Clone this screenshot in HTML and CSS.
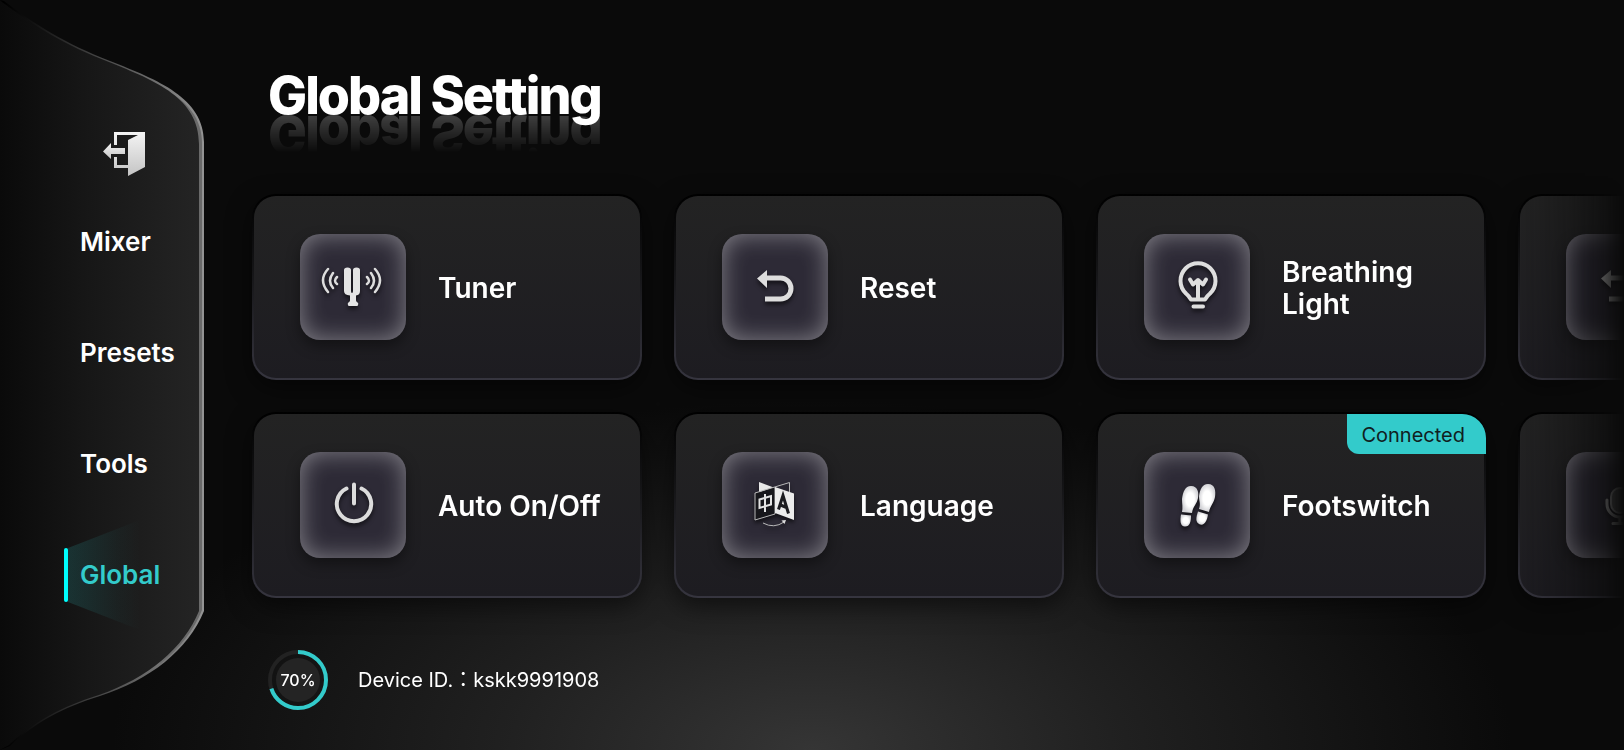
FILE: index.html
```html
<!DOCTYPE html>
<html lang="en">
<head>
	<meta charset="utf-8">
	<title>Global Setting</title>
	<meta name="viewport" content="width=device-width, initial-scale=1">
	<link rel="stylesheet" href="styles.css">
</head>
<body>
	<!-- Shared paint for the icons -->
	<svg class="defs" width="0" height="0" aria-hidden="true">
		<defs>
			<linearGradient id="metal" x1="0" y1="0" x2="0" y2="1">
				<stop offset="0" stop-color="#f4f4f4"/>
				<stop offset="1" stop-color="#c4c4c4"/>
			</linearGradient>
			<radialGradient id="sole">
				<stop offset=".5" stop-color="#fff"/>
				<stop offset="1" stop-color="#d4d4d8"/>
			</radialGradient>
			<symbol id="icon-reset" viewBox="0 0 64 64">
				<path fill="#dedede" d="M14 23.500 24 15v5.500h13.500a13 13 0 0 1 0 26H22v-5h15.500a8 8 0 0 0 0-16H24V33z"/>
			</symbol>
		</defs>
	</svg>

	<aside class="sidebar">
		<svg class="sidebar-shape" viewBox="0 0 206 750" preserveAspectRatio="none" aria-hidden="true">
			<defs>
				<linearGradient id="panel">
					<stop offset="0" stop-color="#0a0a0a"/>
					<stop offset=".45" stop-color="#171717"/>
					<stop offset="1" stop-color="#242424"/>
				</linearGradient>
				<linearGradient id="edge" gradientUnits="userSpaceOnUse" x1="0" y1="0" x2="204" y2="0">
					<stop offset=".02" stop-color="#000"/>
					<stop offset=".18" stop-color="#141414"/>
					<stop offset=".5" stop-color="#484848"/>
					<stop offset="1" stop-color="#949494"/>
				</linearGradient>
			</defs>
			<path fill="url(#edge)" d="M4 1C34 24 66 44 110 61C158 80 204 98 204 142V611C188 650 150 680 100 696C62 708 36 722 10 746L0 750V0z"/>
			<path fill="#6a6a6a" d="M150 82C190 99 202 120 202 144V610C194 630 180 648 160 664z"/>
			<path fill="url(#panel)" d="M2 2C34 26 66 46 109 62C156 81 199 98 199 144V611C184 648 148 678 99 695C61 707 35 721 9 745L0 750V0z"/>
		</svg>
		<a class="exit" href="#" aria-label="Exit">
			<svg viewBox="0 0 42 45" width="42" height="45" aria-hidden="true">
				<path fill="url(#metal)" d="M0 20.500 8 12v5h14v6H8v5z"/>
				<path fill="url(#metal)" d="M11 1H42V36L25 45V37H11V26h3v8H25V9L35 4H14v10h-3z"/>
			</svg>
		</a>
		<nav class="menu">
			<a href="#mixer">Mixer</a>
			<a href="#presets">Presets</a>
			<a href="#tools">Tools</a>
			<a class="active" href="#global" aria-current="page">Global</a>
		</nav>
	</aside>

	<main>
		<h1>Global Setting</h1>

		<div class="cards">
			<button class="card" type="button">
				<span class="tile">
					<svg viewBox="0 0 64 64" aria-hidden="true">
						<g fill="#e4e4e4">
							<path d="M23 15q0-2.500 3.500-2.500t3.500 2.500v21q0 2 1 2t1-2V15q0-2.500 3.500-2.500t3.500 2.500v21q0 4-4 4.500v5q0 1 1.500 2t0 3.500h-9q-1.500-2.500 0-3.500t1.500-2v-5q-6-.5-6-4.500z"/>
						</g>
						<g fill="none" stroke="#dcdcdc" stroke-width="2.500" stroke-linecap="round">
							<path d="M7 14q-10 11 0 23M12 18q-6 8 0 15M16 22q-4 4 0 7M46 22q4 4 0 7M50 18q6 8 0 15M54 14q10 11 0 23"/>
						</g>
					</svg>
				</span>
				<span class="label">Tuner</span>
			</button>
			<button class="card" type="button">
				<span class="tile"><svg viewBox="0 0 64 64" aria-hidden="true"><use href="#icon-reset"/></svg></span>
				<span class="label">Reset</span>
			</button>
			<button class="card" type="button">
				<span class="tile">
					<svg viewBox="0 0 64 64" aria-hidden="true">
						<g fill="none" stroke="#dedede" stroke-width="4" stroke-linecap="round" stroke-linejoin="round">
							<path d="M26 44.500H40Q42 41 45 38.500A17.500 17.500 0 1 0 21 38.500Q24 41 26 44.500z"/>
							<path d="M33 44V28M25 24.500l3 5 5-4.500 5 4.500 3-5M28.500 51.500h9.500"/>
						</g>
					</svg>
				</span>
				<span class="label">Breathing Light</span>
			</button>
			<button class="card" type="button" aria-label="Reset">
				<span class="tile"><svg viewBox="0 0 64 64" aria-hidden="true"><use href="#icon-reset"/></svg></span>
			</button>
			<button class="card" type="button">
				<span class="tile">
					<svg viewBox="0 0 64 64" aria-hidden="true">
						<g fill="none" stroke="#dcdcdc" stroke-width="4" stroke-linecap="round">
							<path d="M25.500 15.500a17.200 17.200 0 1 0 15 0M33 11.500v19"/>
						</g>
					</svg>
				</span>
				<span class="label">Auto On/Off</span>
			</button>
			<button class="card" type="button">
				<span class="tile">
					<svg viewBox="0 0 64 64" aria-hidden="true">
						<path fill="#e8e8e8" d="M16 9 32 15 16 20z"/>
						<path fill="#17171b" d="M12 20.500 31.500 14V41L12 47z"/>
						<path fill="none" stroke="#b8b8b8" d="M12 20 46.500 9.500V20M12 20V47L32 41V14"/>
						<path fill="#ececec" d="M32 14 51 20.500V47L32 40z"/>
						<path fill="none" stroke="#e4e4e4" stroke-width="2" d="M16.500 26.500 28 23v8.500L16.500 35zM22 21v18"/>
						<path fill="none" stroke="#1c1c20" stroke-width="3" d="M35.500 36.500 40 22.500 45.500 40.500M37.500 32l6 2.500"/>
						<path fill="none" stroke="#b8b8b8" d="M20 50q11 6 21-1"/>
						<path fill="#dedede" d="M38.500 47.500 43 47l-1.500 4z"/>
					</svg>
				</span>
				<span class="label">Language</span>
			</button>
			<button class="card" type="button">
				<span class="tile">
					<svg viewBox="0 0 64 64" aria-hidden="true">
						<g fill="url(#sole)">
							<path d="M26 13c7 0 8 7 7 12-1 6-5 8-6 15l-10-1c1-5 0-8 0-13 1-7 3-13 9-13z"/>
							<path d="M16 41.500l10 1c0 6-1 11-6 11s-5-6-4-12z"/>
							<path d="M43 11c7 0 8 7 7 13-1 6-5 9-6 15l-10-3c2-5 0-8 0-13 1-6 3-12 9-12z"/>
							<path d="M33 38.500l10 3c-1 6-3 11-8 10-5-2-4-7-2-13z"/>
						</g>
					</svg>
				</span>
				<span class="label">Footswitch</span>
				<span class="badge">Connected</span>
			</button>
			<button class="card" type="button" aria-label="Microphone">
				<span class="tile">
					<svg viewBox="0 0 64 64" aria-hidden="true">
						<rect x="24" y="15" width="18" height="25" rx="9" fill="#6c6c6c" stroke="#bbb" stroke-width="2"/>
						<path fill="none" stroke="#bbb" stroke-width="3" stroke-linecap="round" d="M20 27v4a13 13 0 0 0 26 0v-4M33 44v6M26 50.500h14"/>
					</svg>
				</span>
			</button>
		</div>

		<footer class="status">
			<div class="battery" role="img" aria-label="Battery">
				<svg viewBox="0 0 60 60" aria-hidden="true">
					<circle cx="30" cy="30" r="28" fill="none" stroke="#222" stroke-width="4"/>
					<circle cx="30" cy="30" r="22" fill="#242424"/>
					<circle cx="30" cy="30" r="28" fill="none" stroke="#33cbcb" stroke-width="4" pathLength="100" stroke-dasharray="70 100" transform="rotate(-90 30 30)"/>
				</svg>
				<span>70%</span>
			</div>
			<p>Device ID.：kskk9991908</p>
		</footer>
	</main>
</body>
</html>
```
FILE: styles.css
```css
* {
	box-sizing: border-box;
}

body {
	margin: 0;
	min-height: 100vh;
	display: flex;
	font-family: Inter, "Noto Sans CJK TC", sans-serif;
	color: #fff;
	background: radial-gradient(ellipse 700px 350px at 50% 100%, #353535, #202020 45%, #0a0a0a) #0a0a0a;
}

.defs {
	position: absolute;
}

/* Sidebar */

.sidebar {
	position: relative;
	flex: none;
	width: 206px;
	padding-top: 131px;
}

.sidebar-shape {
	position: absolute;
	inset: 0;
	width: 100%;
	height: 100%;
	z-index: -1;
}

.exit {
	display: block;
	width: 42px;
	height: 45px;
	margin-left: 103px;
}

.menu {
	display: flex;
	flex-direction: column;
	gap: 57px;
	margin-top: 39px;
	padding-left: 64px;
}

.menu a {
	position: relative;
	padding-left: 16px;
	font-size: 26px;
	font-weight: 600;
	line-height: 54px;
	color: #fff;
	text-decoration: none;
}

.menu .active {
	color: #33cbcb;
}

.active::before {
	content: '';
	position: absolute;
	inset: 0 auto 0 0;
	width: 4px;
	border-radius: 2px;
	background: #0ff;
}

/* Light cone coming out of the marker */
.active::after {
	content: '';
	position: absolute;
	z-index: -1;
	top: -28px;
	bottom: -28px;
	left: 4px;
	width: 72px;
	background: linear-gradient(to right, rgba(51, 203, 203, .17), rgba(51, 203, 203, .04) 70%, transparent);
	clip-path: polygon(0 28px, 100% 0, 100% 100%, 0 82px);
}

/* Content */

main {
	flex: 1;
	min-width: 0;
	padding: 77px 0 40px 46px;
	overflow: hidden;
	/* the row of cards fades out at the window edge */
	-webkit-mask-image: linear-gradient(to left, transparent, rgba(0, 0, 0, .3) 20px, rgba(0, 0, 0, .7) 58px, #000 105px);
}

h1 {
	width: fit-content;
	margin: 0 0 79px 16px;
	font-size: 52px;
	font-weight: 800;
	line-height: 38px;
	letter-spacing: -2px;
	-webkit-box-reflect: below 0 linear-gradient(transparent, rgba(255, 255, 255, .22));
}

.cards {
	display: grid;
	grid-template-columns: repeat(4, 390px);
	gap: 32px;
}

.card {
	position: relative;
	display: flex;
	align-items: center;
	gap: 32px;
	height: 186px;
	padding: 0 38px 0 46px;
	border: 2px solid transparent;
	border-radius: 24px;
	background:
		linear-gradient(#232323, #1d1c21) padding-box,
		linear-gradient(#000, #141416 40%, #36353f) border-box;
	box-shadow: 0 8px 24px rgba(0, 0, 0, .5);
	color: #fff;
	font: inherit;
	text-align: left;
}

.tile {
	display: grid;
	place-items: center;
	flex: none;
	width: 106px;
	height: 106px;
	border-radius: 20px;
	background: #2d2a36;
	box-shadow: inset 0 0 24px rgba(255, 255, 255, .42), 0 6px 14px rgba(0, 0, 0, .4);
}

.tile svg {
	width: 64px;
	height: 64px;
	filter: drop-shadow(0 3px 2px rgba(0, 0, 0, .6));
}

.label {
	padding-top: 2px;
	font-size: 28px;
	font-weight: 600;
	line-height: 32px;
}

.badge {
	position: absolute;
	top: 0;
	right: -2px;
	padding: 2px 21px 0 14px;
	border-radius: 0 24px 0 12px;
	background: #33cbcb;
	color: #10201f;
	font-size: 20px;
	line-height: 38px;
}

.status {
	display: flex;
	align-items: center;
	gap: 30px;
	margin: 52px 0 0 16px;
	font-size: 20px;
	line-height: 24px;
}

.status p {
	margin: 0;
}

.battery {
	display: grid;
	place-items: center;
	width: 60px;
	height: 60px;
	font-size: 16px;
	font-weight: 500;
}

.battery > * {
	grid-area: 1 / 1;
}
```
